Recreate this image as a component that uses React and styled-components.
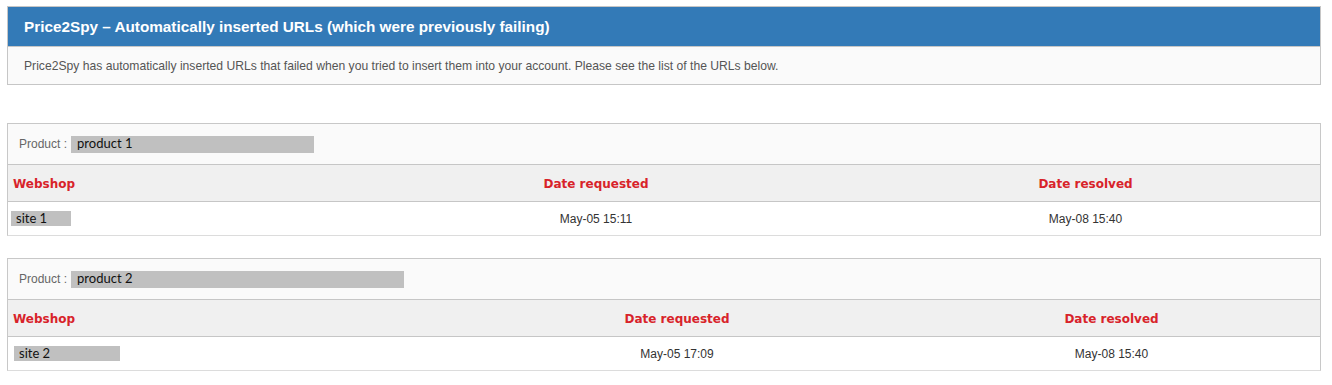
import React from 'react'
import styled, { createGlobalStyle } from 'styled-components'

const GlobalStyle = createGlobalStyle`
  body {
    margin: 0;
    background: #fff;
    font-family: "Liberation Sans", Arial, sans-serif;
  }
`

const products = [
  {
    name: 'product 1',
    barWidth: 243,
    site: 'site 1',
    siteWidth: 60,
    siteIndent: 3,
    requested: 'May-05 15:11',
    resolved: 'May-08 15:40',
    columns: '333px 510px 1fr',
  },
  {
    name: 'product 2',
    barWidth: 333,
    site: 'site 2',
    siteWidth: 106,
    siteIndent: 6,
    requested: 'May-05 17:09',
    resolved: 'May-08 15:40',
    columns: '443px 452px 1fr',
  },
]

export default function App() {
  return (
    <Page>
      <GlobalStyle />
      <InfoPanel>
        <TitleBar>Price2Spy – Automatically inserted URLs (which were previously failing)</TitleBar>
        <InfoText>
          Price2Spy has automatically inserted URLs that failed when you tried to insert them into your account. Please see the list of the URLs below.
        </InfoText>
      </InfoPanel>
      <List>
        {products.map(p => (
          <ProductCard key={p.name}>
            <ProductRow>
              <Label>Product :</Label>
              <Masked $width={p.barWidth}>{p.name}</Masked>
            </ProductRow>
            <Grid $columns={p.columns} $head>
              <HeadCell>Webshop</HeadCell>
              <HeadCell $center>Date requested</HeadCell>
              <HeadCell $center>Date resolved</HeadCell>
            </Grid>
            <Grid $columns={p.columns}>
              <Cell>
                <SiteMask $width={p.siteWidth} $indent={p.siteIndent}>{p.site}</SiteMask>
              </Cell>
              <Cell $center>{p.requested}</Cell>
              <Cell $center>{p.resolved}</Cell>
            </Grid>
          </ProductCard>
        ))}
      </List>
    </Page>
  )
}

const Page = styled.div`
  padding: 6px 11px 0 7px;
`

const InfoPanel = styled.section`
  border: 1px solid #c6c6c6;
  background: #fafafa;
`

const TitleBar = styled.h1`
  margin: 0;
  height: 39px;
  display: flex;
  align-items: center;
  padding-left: 16px;
  background: #337ab7;
  border-bottom: 1px solid #c6c6c6;
  color: #fff;
  font-size: 15.3px;
  font-weight: bold;
`

const InfoText = styled.p`
  margin: 0;
  height: 37px;
  display: flex;
  align-items: center;
  padding-left: 16px;
  font-size: 12.15px;
  color: #555;
`

const List = styled.div`
  margin-top: 38px;
  display: flex;
  flex-direction: column;
  gap: 22px;
`

const ProductCard = styled.div`
  border: 1px solid #c8c8c8;
  border-bottom-color: #dcdcdc;
`

const ProductRow = styled.div`
  height: 40px;
  display: flex;
  align-items: center;
  padding-left: 11px;
  gap: 4px;
  background: #fafafa;
  border-bottom: 1px solid #c6c6c6;
`

const Label = styled.span`
  font-size: 12px;
  color: #666;
`

const Masked = styled.span`
  width: ${p => p.$width}px;
  height: 17px;
  padding-left: 6px;
  background: #c0c0c0;
  font-family: Lato, "Open Sans", sans-serif;
  font-size: 13px;
  line-height: 15px;
  color: #111;
  box-sizing: border-box;
`

const Grid = styled.div`
  display: grid;
  grid-template-columns: ${p => p.$columns};
  height: ${p => (p.$head ? 36 : 33)}px;
  align-items: center;
  background: ${p => (p.$head ? '#f0f0f0' : '#fff')};
  border-bottom: ${p => (p.$head ? '1px solid #c6c6c6' : 'none')};
`

const HeadCell = styled.div`
  padding-left: ${p => (p.$center ? 0 : 5)}px;
  padding-top: 2px;
  text-align: ${p => (p.$center ? 'center' : 'left')};
  font-family: "DejaVu Sans", Verdana, sans-serif;
  font-weight: bold;
  font-size: 12px;
  color: #d8232a;
`

const Cell = styled.div`
  text-align: ${p => (p.$center ? 'center' : 'left')};
  font-size: 12px;
  color: #333;
`

const SiteMask = styled.div`
  width: ${p => p.$width}px;
  height: 15px;
  margin-left: ${p => p.$indent}px;
  padding-left: 5px;
  box-sizing: border-box;
  background: #c0c0c0;
  font-family: Lato, "Open Sans", sans-serif;
  font-size: 13px;
  line-height: 15px;
  color: #111;
`
